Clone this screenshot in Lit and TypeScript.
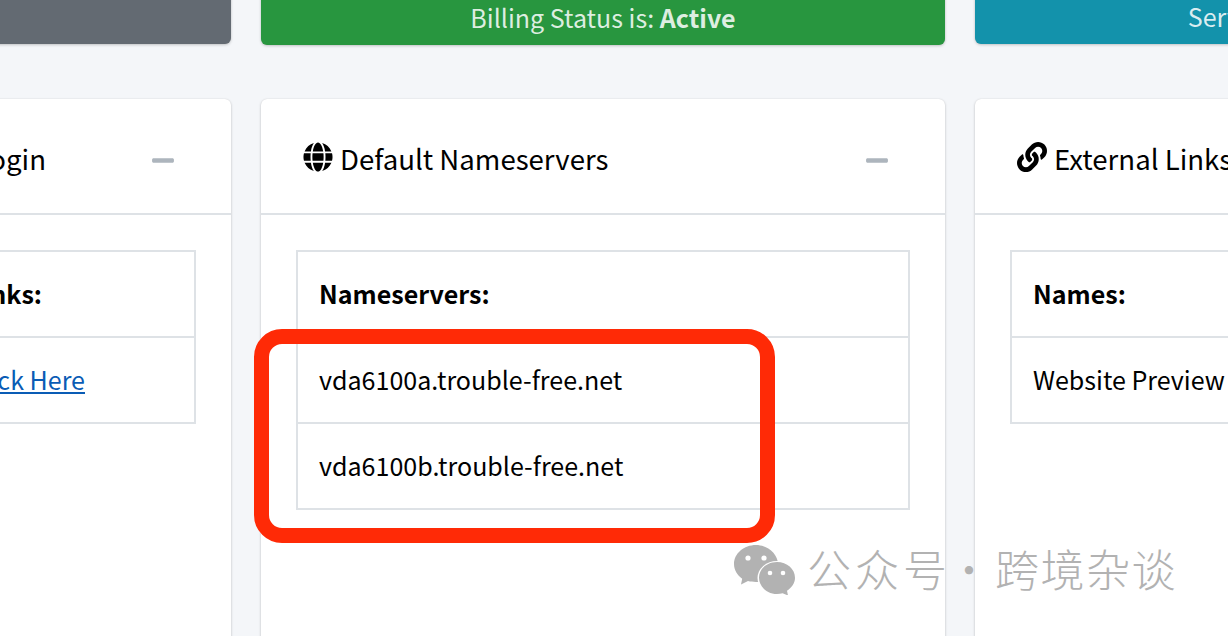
import { LitElement, html, css, svg } from 'lit';
import { customElement } from 'lit/decorators.js';

const globe = svg`<path d="M336.5 160C322 70.7 287.8 8 248 8s-74 62.7-88.5 152h177zM152 256c0 22.2 1.2 43.5 3.3 64h185.3c2.1-20.5 3.3-41.8 3.3-64s-1.2-43.5-3.3-64H155.3c-2.1 20.5-3.3 41.8-3.3 64zm324.7-96c-28.6-67.9-86.5-120.4-158-141.6 24.4 33.8 41.2 84.7 50 141.6h108zM177.2 18.4C105.8 39.6 47.8 92.1 19.3 160h108c8.7-56.9 25.5-107.8 49.9-141.6zM487.4 192H372.7c2.1 21 3.3 42.5 3.3 64s-1.2 43-3.3 64h114.6c5.5-20.5 8.6-41.8 8.6-64s-3.1-43.5-8.5-64zM120 256c0-21.5 1.2-43 3.3-64H8.6C3.2 212.5 0 233.8 0 256s3.2 43.5 8.6 64h114.6c-2-21-3.2-42.5-3.2-64zm39.5 96c14.5 89.3 48.7 152 88.5 152s74-62.7 88.5-152h-177zm159.3 141.6c71.4-21.2 129.4-73.7 158-141.6h-108c-8.8 56.9-25.6 107.8-50 141.6zM19.3 352c28.6 67.9 86.5 120.4 158 141.6-24.4-33.8-41.2-84.7-50-141.6h-108z"/>`;

const link = svg`<path d="M326.612 185.391c59.747 59.809 58.927 155.698.36 214.59-.11.12-.24.25-.36.37l-67.2 67.2c-59.27 59.27-155.699 59.262-214.96 0-59.27-59.26-59.27-155.7 0-214.96l37.106-37.106c9.84-9.84 26.786-3.3 27.294 10.606.648 17.722 3.826 35.527 9.69 52.721 1.986 5.822.567 12.262-3.783 16.612l-13.087 13.087c-28.026 28.026-28.905 73.66-1.155 101.96 28.024 28.579 74.086 28.749 102.325.51l67.2-67.19c28.191-28.191 28.073-73.757 0-101.83-3.701-3.694-7.429-6.564-10.341-8.569a16.037 16.037 0 0 1-6.947-12.606c-.396-10.567 3.348-21.456 11.698-29.806l21.054-21.055c5.521-5.521 14.182-6.199 20.584-1.731a152.482 152.482 0 0 1 20.522 17.197zM467.547 44.449c-59.261-59.262-155.69-59.27-214.96 0l-67.2 67.2c-.12.12-.25.25-.36.37-58.566 58.892-59.387 154.781.36 214.59a152.454 152.454 0 0 0 20.521 17.196c6.402 4.468 15.064 3.789 20.584-1.731l21.054-21.055c8.35-8.35 12.094-19.239 11.698-29.806a16.037 16.037 0 0 0-6.947-12.606c-2.912-2.005-6.64-4.875-10.341-8.569-28.073-28.073-28.191-73.639 0-101.83l67.2-67.19c28.239-28.239 74.3-28.069 102.325.51 27.75 28.3 26.872 73.934-1.155 101.96l-13.087 13.087c-4.35 4.35-5.769 10.79-3.783 16.612 5.864 17.194 9.042 34.999 9.69 52.721.509 13.906 17.454 20.446 27.294 10.606l37.106-37.106c59.271-59.259 59.271-155.699.001-214.959z"/>`;

const minus = html`<svg class="minus" viewBox="0 0 448 512"><path d="M416 208H32c-17.67 0-32 14.33-32 32v32c0 17.67 14.33 32 32 32h384c17.67 0 32-14.33 32-32v-32c0-17.67-14.33-32-32-32z"/></svg>`;

@customElement('app-root')
export class AppRoot extends LitElement {
  render() {
    return html`
      <div class="page">
        <div class="bars">
          <div class="bar grey"></div>
          <div class="bar green"><span>Billing Status is: <b>Active</b></span></div>
          <div class="bar teal"><span>Server Status is: Online</span></div>
        </div>

        <div class="cards">
          <section class="card">
            <header class="head end">
              <h3>Login</h3>
              ${minus}
            </header>
            <div class="body">
              <div class="tbl">
                <div class="row th end-th">Links:</div>
                <div class="row end-td"><a href="#">Click Here</a></div>
              </div>
            </div>
          </section>

          <section class="card">
            <header class="head">
              <h3><svg class="ico" viewBox="0 0 496 512">${globe}</svg>Default Nameservers</h3>
              ${minus}
            </header>
            <div class="body">
              <div class="tbl">
                <div class="row th">Nameservers:</div>
                <div class="row">vda6100a.trouble-free.net</div>
                <div class="row">vda6100b.trouble-free.net</div>
              </div>
            </div>
          </section>

          <section class="card">
            <header class="head">
              <h3><svg class="ico" viewBox="0 0 512 512">${link}</svg>External Links</h3>
              ${minus}
            </header>
            <div class="body">
              <div class="tbl">
                <div class="row th">Names:</div>
                <div class="row">Website Preview</div>
              </div>
            </div>
          </section>
        </div>
      </div>

      <div class="callout"></div>

      <div class="mark">
        <svg class="wechat" viewBox="0 0 62 50">
          <path d="M22 0C10 0 0 8.500 0 19c0 6 3.200 11.200 8.200 14.800L7 39.500l7-3.400c2.500.6 5 .9 8 .9 12 0 22-8.500 22-18S34 0 22 0z" fill="#b2b2b2"/>
          <circle cx="14" cy="13" r="2.600" fill="#fff"/>
          <circle cx="30" cy="13" r="2.600" fill="#fff"/>
          <ellipse cx="43" cy="33" rx="19.500" ry="17" fill="#fff"/>
          <path d="M43 17c-10 0-18 7-18 15.800S33 49 43 49c2 0 3.900-.3 5.600-.8l5.400 2.300-1-4.800C58 42.700 61 38 61 32.800 61 24 53 17 43 17z" fill="#b2b2b2"/>
          <circle cx="36" cy="28" r="2.300" fill="#fff"/>
          <circle cx="49" cy="28" r="2.300" fill="#fff"/>
        </svg>
        <span class="mark-a">公众号</span>
        <span class="mark-dot">·</span>
        <span class="mark-b">跨境杂谈</span>
      </div>
    `;
  }

  static styles = css`
    :host {
      display: block;
      position: relative;
      width: 1228px;
      height: 636px;
      overflow: hidden;
      background: #f4f6f9;
      color: #000;
      font-family: "Noto Sans CJK SC", "Noto Sans", sans-serif;
      font-size: 25.05px;
    }

    .page {
      margin-left: -453px;
      width: 2112px;
    }

    .bars,
    .cards {
      display: grid;
      grid-template-columns: repeat(3, 684px);
      gap: 30px;
    }

    .bars {
      align-items: start;
      margin-top: -20px;
    }

    .bar {
      display: flex;
      justify-content: center;
      align-items: center;
      box-sizing: border-box;
      height: 64px;
      padding-top: 8px;
      border-radius: 6px;
      box-shadow: 0 0 1px rgba(0, 0, 0, .125), 0 1px 3px rgba(0, 0, 0, .2);
      color: rgba(255, 255, 255, .85);
    }

    .bar b {
      font-weight: 700;
    }

    .grey {
      background: #636a72;
    }

    .green {
      height: 65px;
      background: #28963f;
    }

    .teal {
      padding-left: 10px;
      background: #1392ab;
    }

    .cards {
      margin-top: 54px;
    }

    .card {
      height: 640px;
      background: #fff;
      border-radius: 6px;
      box-shadow: 0 0 1px rgba(0, 0, 0, .125), 0 1px 3px rgba(0, 0, 0, .2);
    }

    .head {
      display: flex;
      justify-content: space-between;
      align-items: center;
      height: 114px;
      padding: 0 57px 0 42px;
      border-bottom: 2px solid #dee2e6;
    }

    .head.end {
      justify-content: flex-end;
      gap: 106px;
    }

    h3 {
      display: flex;
      align-items: center;
      margin: 4px 0 0;
      font-size: 27.6px;
      font-weight: 400;
    }

    .ico {
      width: 30px;
      height: 30px;
      margin: 0 7px 2px 0;
      fill: #000;
    }

    .minus {
      width: 22px;
      height: 25px;
      margin-top: 8px;
      fill: #adb5bd;
    }

    .body {
      padding: 35px 35px;
    }

    .tbl {
      border: 2px solid #dee2e6;
    }

    .row {
      display: flex;
      align-items: center;
      box-sizing: border-box;
      height: 84px;
      padding: 0 21px 3px;
    }

    .row + .row {
      height: 86px;
      border-top: 2px solid #dee2e6;
    }

    .th {
      font-weight: 700;
    }

    .end-th {
      justify-content: flex-end;
      padding-right: 152px;
    }

    .end-td {
      justify-content: flex-end;
      padding-right: 109px;
    }

    a {
      color: #0a5cb5;
    }

    .callout {
      position: absolute;
      left: 254px;
      top: 329px;
      width: 521px;
      height: 214px;
      box-sizing: border-box;
      border: 15px solid #ff2a06;
      border-radius: 28px;
    }

    .mark {
      position: absolute;
      left: 734px;
      top: 545px;
      display: flex;
      align-items: flex-start;
      height: 50px;
      color: #b2b2b2;
      font-size: 44px;
      font-weight: 300;
      line-height: 46px;
      white-space: nowrap;
    }

    .wechat {
      width: 62px;
      height: 50px;
      margin-right: 11px;
    }

    .mark-a {
      letter-spacing: 4px;
    }

    .mark-dot {
      margin: 0 4px 0 -4px;
    }

    .mark-b {
      letter-spacing: 1.500px;
    }
  `;
}
